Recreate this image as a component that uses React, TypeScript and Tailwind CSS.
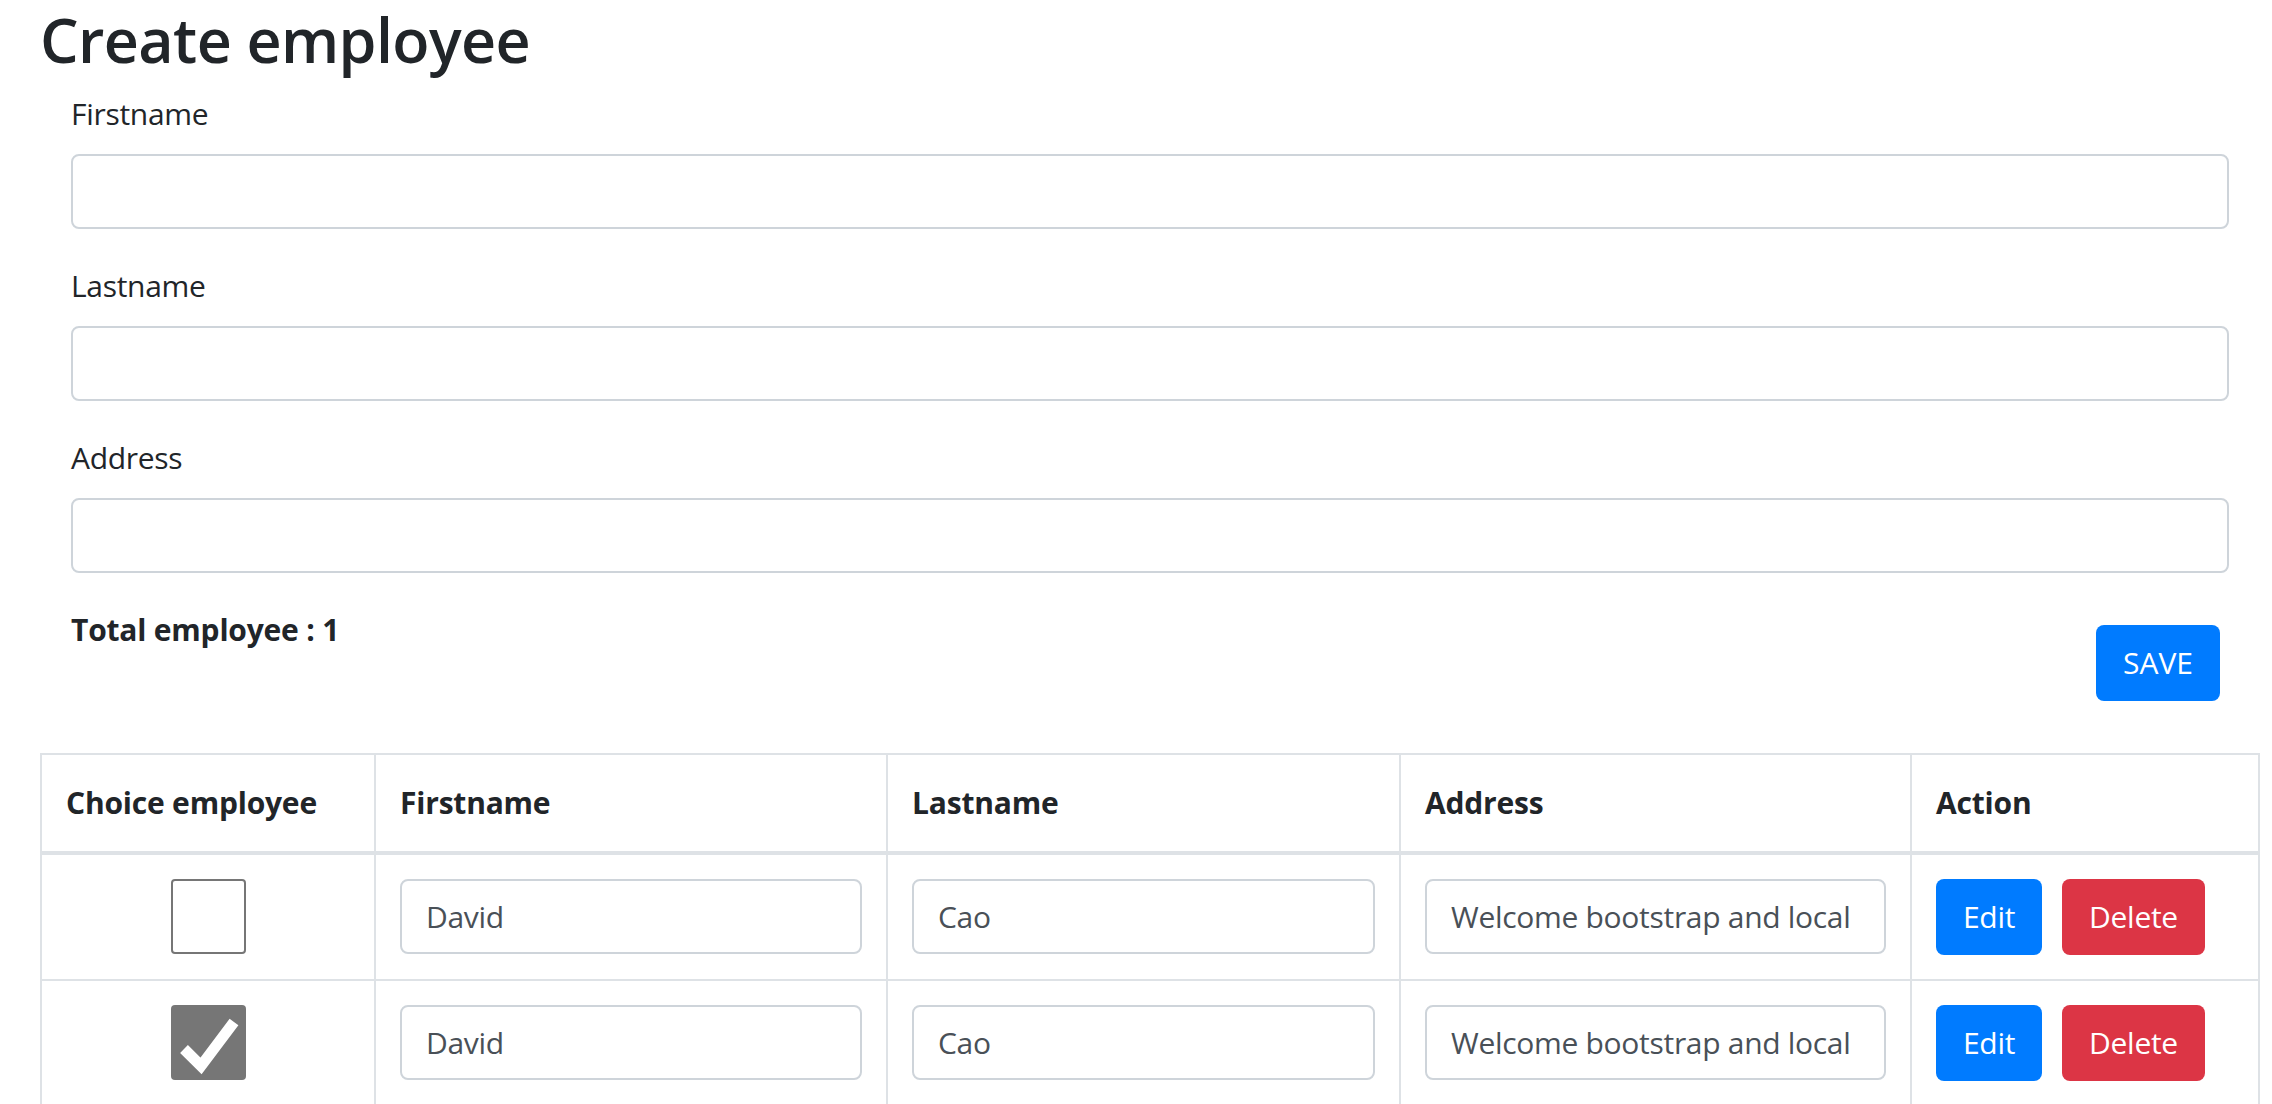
import React from "react";

const font = { fontFamily: '"Open Sans", "Noto Sans", sans-serif' };

function Field({ label }: { label: string }) {
  return (
    <div className="mb-[33px]">
      <label className="block text-[30px] tracking-[-0.3px] leading-[48px] mb-[16px] text-[#212529]">{label}</label>
      <input
        type="text"
        className="block w-full h-[75px] px-[24px] border-2 border-[#ced4da] rounded-[8px] bg-white text-[30px] text-[#495057] outline-none"
      />
    </div>
  );
}

function CheckBox({ checked }: { checked: boolean }) {
  if (checked) {
    return (
      <div className="w-[75px] h-[75px] rounded-[4px] bg-[#767676] flex items-center justify-center">
        <svg width="75" height="75" viewBox="0 0 75 75">
          <path d="M13 44 L30 61 L63 17" fill="none" stroke="#ffffff" strokeWidth="11" strokeLinecap="butt" strokeLinejoin="miter" />
        </svg>
      </div>
    );
  }
  return <div className="w-[75px] h-[75px] rounded-[4px] border-2 border-[#767676] bg-white" />;
}

function CellInput({ value }: { value: string }) {
  return (
    <input
      type="text"
      readOnly
      value={value}
      className="block w-full h-[75px] px-[24px] border-2 border-[#ced4da] rounded-[8px] bg-white text-[30px] tracking-[-0.3px] text-[#495057] outline-none"
    />
  );
}

function Row({ checked }: { checked: boolean }) {
  const cell = "border-r-2 border-b-2 border-[#dee2e6] p-[24px]";
  return (
    <>
      <div className={cell + " flex justify-center items-start"}>
        <CheckBox checked={checked} />
      </div>
      <div className={cell}>
        <CellInput value="David" />
      </div>
      <div className={cell}>
        <CellInput value="Cao" />
      </div>
      <div className={cell}>
        <CellInput value="Welcome bootstrap and local" />
      </div>
      <div className={cell + " flex items-start gap-[20px]"}>
        <button className="w-[106px] h-[76px] rounded-[8px] bg-[#007bff] text-white text-[30px] tracking-[-0.3px] leading-[48px] flex items-center justify-center">Edit</button>
        <button className="w-[143px] h-[76px] rounded-[8px] bg-[#dc3545] text-white text-[30px] tracking-[-0.3px] leading-[48px] flex items-center justify-center">Delete</button>
      </div>
    </>
  );
}

export default function App() {
  const th = "border-r-2 border-b-4 border-[#dee2e6] px-[24px] pt-[24px] pb-[24px] text-[30px] tracking-[-0.2px] leading-[48px] font-bold text-[#212529]";
  return (
    <div className="bg-white min-h-[1104px] w-[2272px] text-[#212529]" style={font}>
      <div className="ml-[40px] w-[2220px]">
        <h2 className="text-[61px] tracking-[-0.6px] leading-[80px] font-semibold text-[#212529]">Create employee</h2>
        <div className="px-[31px] mt-[10px]">
          <Field label="Firstname" />
          <Field label="Lastname" />
          <Field label="Address" />
          <div className="flex justify-between items-start">
            <div className="text-[30px] tracking-[-0.2px] leading-[48px] font-bold text-[#212529]">Total employee : 1</div>
            <button className="mt-[19px] mr-[9px] w-[124px] h-[76px] rounded-[8px] bg-[#007bff] text-white text-[30px] leading-[48px] flex items-center justify-center">SAVE</button>
          </div>
        </div>
        <div className="mt-[52px] grid grid-cols-[334px_512px_513px_511px_1fr] border-t-2 border-l-2 border-[#dee2e6]">
          <div className={th}>Choice employee</div>
          <div className={th}>Firstname</div>
          <div className={th}>Lastname</div>
          <div className={th}>Address</div>
          <div className={th}>Action</div>
          <Row checked={false} />
          <Row checked={true} />
        </div>
      </div>
    </div>
  );
}
